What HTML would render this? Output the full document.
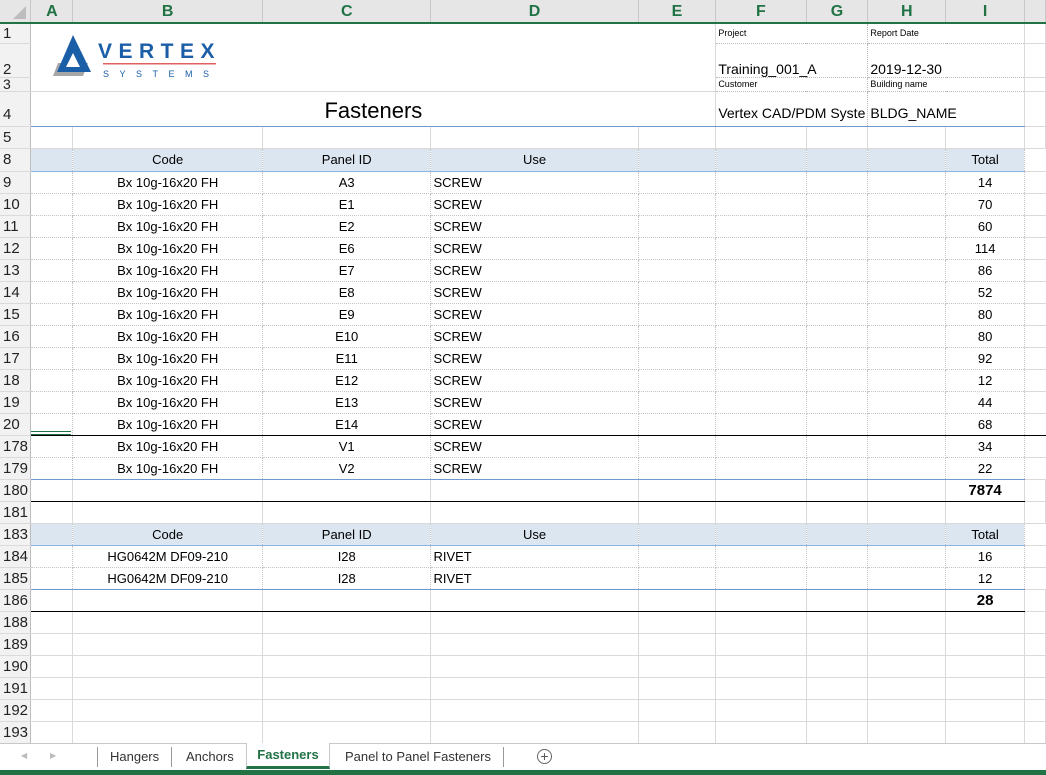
<!DOCTYPE html>
<html><head><meta charset="utf-8"><style>
*{margin:0;padding:0;box-sizing:border-box}
body{width:1046px;height:775px;overflow:hidden;background:#fff;font-family:"Liberation Sans",Arial,sans-serif;position:relative}
table{border-collapse:collapse;table-layout:fixed;position:absolute;left:0;top:0}
td,th{font-size:13px;color:#000;white-space:nowrap;overflow:hidden;padding:0 2px;border-right:1px solid #dadada;border-bottom:1px solid #dadada;font-weight:normal;vertical-align:middle;line-height:15px}
th.r{background:#f2f2f2;border-right:1px solid #bdbdbd;border-bottom:1px solid #dadada;text-align:left;padding-left:3px;font-size:15px;color:#222}
tr.hd th{background:#e6e6e6;color:#217346;font-weight:bold;font-size:16px;text-align:center;border-right:1px solid #c8c8c8;border-bottom:2px solid #217346}
.c{text-align:center}
tr.d td{border-right:1px dotted #c4c4c4;border-bottom:1px dotted #c4c4c4}
tr.h8 td{background:#dce6f1;border-top:1px solid #6f98cf;border-bottom:1px solid #8db4e2;border-right:1px dotted #c4c4c4}
tr.h8 td.x,tr.d td.x{background:#fff;border-right:none;border-bottom:1px solid #dadada}
tr.blk td{border-bottom:1px solid #000}
tr.blu td{border-bottom:1px solid #6f98cf}
.sm{font-size:9px;line-height:10px}
tr.tot td{font-weight:bold;font-size:15px}
</style></head><body>
<table>
<colgroup><col style="width:31px"><col style="width:42px"><col style="width:190px"><col style="width:169px"><col style="width:208px"><col style="width:78px"><col style="width:89px"><col style="width:61px"><col style="width:78px"><col style="width:79px"><col style="width:21px"></colgroup>
<tr class="hd" style="height:23px"><th></th><th>A</th><th>B</th><th>C</th><th>D</th><th>E</th><th>F</th><th>G</th><th>H</th><th>I</th><th></th></tr>
<tr style="height:20px"><th class="r">1</th><td colspan="5" rowspan="3"></td><td colspan="2" class="sm" style="border-right:1px dotted #bbb;border-bottom:1px dotted #bbb">Project</td><td class="sm" style="border-bottom:1px dotted #bbb" colspan="2">Report Date</td><td></td></tr>
<tr style="height:34px"><th class="r" style="vertical-align:bottom">2</th><td colspan="2" style="font-size:14px;vertical-align:bottom;border-right:1px dotted #bbb;border-bottom:1px dotted #bbb">Training_001_A</td><td colspan="2" style="font-size:14px;vertical-align:bottom;border-bottom:1px dotted #bbb">2019-12-30</td><td></td></tr>
<tr style="height:14px"><th class="r" style="font-size:14px;line-height:12px">3</th><td colspan="2" class="sm" style="border-right:1px dotted #bbb;border-bottom:1px dotted #bbb">Customer</td><td colspan="2" class="sm" style="border-bottom:1px dotted #bbb">Building name</td><td></td></tr>
<tr style="height:35px" class="blu"><th class="r" style="border-bottom:1px solid #dadada;vertical-align:bottom;padding-bottom:4px">4</th><td colspan="5" style="text-align:center;font-size:22px;line-height:26px;padding:4px 0 0 0">Fasteners</td><td colspan="2" style="font-size:14px;border-right:1px dotted #bbb;vertical-align:bottom;padding-bottom:5px">Vertex CAD/PDM Syste</td><td colspan="2" style="font-size:14px;vertical-align:bottom;padding-bottom:5px">BLDG_NAME</td><td style="border-bottom:1px solid #dadada"></td></tr>
<tr style="height:22px"><th class="r">5</th><td></td><td></td><td></td><td></td><td></td><td></td><td></td><td></td><td></td><td></td></tr>
<tr class="h8" style="height:23px"><th class="r">8</th><td></td><td class="c">Code</td><td class="c">Panel ID</td><td class="c">Use</td><td></td><td></td><td></td><td></td><td class="c">Total</td><td class="x"></td></tr>
<tr class="d" style="height:22px"><th class="r">9</th><td></td><td class="c">Bx 10g-16x20 FH</td><td class="c">A3</td><td>SCREW</td><td></td><td></td><td></td><td></td><td class="c">14</td><td class="x"></td></tr>
<tr class="d" style="height:22px"><th class="r">10</th><td></td><td class="c">Bx 10g-16x20 FH</td><td class="c">E1</td><td>SCREW</td><td></td><td></td><td></td><td></td><td class="c">70</td><td class="x"></td></tr>
<tr class="d" style="height:22px"><th class="r">11</th><td></td><td class="c">Bx 10g-16x20 FH</td><td class="c">E2</td><td>SCREW</td><td></td><td></td><td></td><td></td><td class="c">60</td><td class="x"></td></tr>
<tr class="d" style="height:22px"><th class="r">12</th><td></td><td class="c">Bx 10g-16x20 FH</td><td class="c">E6</td><td>SCREW</td><td></td><td></td><td></td><td></td><td class="c">114</td><td class="x"></td></tr>
<tr class="d" style="height:22px"><th class="r">13</th><td></td><td class="c">Bx 10g-16x20 FH</td><td class="c">E7</td><td>SCREW</td><td></td><td></td><td></td><td></td><td class="c">86</td><td class="x"></td></tr>
<tr class="d" style="height:22px"><th class="r">14</th><td></td><td class="c">Bx 10g-16x20 FH</td><td class="c">E8</td><td>SCREW</td><td></td><td></td><td></td><td></td><td class="c">52</td><td class="x"></td></tr>
<tr class="d" style="height:22px"><th class="r">15</th><td></td><td class="c">Bx 10g-16x20 FH</td><td class="c">E9</td><td>SCREW</td><td></td><td></td><td></td><td></td><td class="c">80</td><td class="x"></td></tr>
<tr class="d" style="height:22px"><th class="r">16</th><td></td><td class="c">Bx 10g-16x20 FH</td><td class="c">E10</td><td>SCREW</td><td></td><td></td><td></td><td></td><td class="c">80</td><td class="x"></td></tr>
<tr class="d" style="height:22px"><th class="r">17</th><td></td><td class="c">Bx 10g-16x20 FH</td><td class="c">E11</td><td>SCREW</td><td></td><td></td><td></td><td></td><td class="c">92</td><td class="x"></td></tr>
<tr class="d" style="height:22px"><th class="r">18</th><td></td><td class="c">Bx 10g-16x20 FH</td><td class="c">E12</td><td>SCREW</td><td></td><td></td><td></td><td></td><td class="c">12</td><td class="x"></td></tr>
<tr class="d" style="height:22px"><th class="r">19</th><td></td><td class="c">Bx 10g-16x20 FH</td><td class="c">E13</td><td>SCREW</td><td></td><td></td><td></td><td></td><td class="c">44</td><td class="x"></td></tr>
<tr class="d blk" style="height:22px"><th class="r">20</th><td></td><td class="c">Bx 10g-16x20 FH</td><td class="c">E14</td><td>SCREW</td><td></td><td></td><td></td><td></td><td class="c">68</td><td class="x" style="border-bottom:1px solid #000"></td></tr>
<tr class="d" style="height:22px"><th class="r">178</th><td></td><td class="c">Bx 10g-16x20 FH</td><td class="c">V1</td><td>SCREW</td><td></td><td></td><td></td><td></td><td class="c">34</td><td class="x"></td></tr>
<tr class="d blu" style="height:22px"><th class="r">179</th><td></td><td class="c">Bx 10g-16x20 FH</td><td class="c">V2</td><td>SCREW</td><td></td><td></td><td></td><td></td><td class="c">22</td><td class="x"></td></tr>
<tr class="blk tot" style="height:22px"><th class="r" style="font-weight:normal">180</th><td></td><td></td><td></td><td></td><td></td><td></td><td></td><td></td><td class="c">7874</td><td style="border-bottom:1px solid #dadada"></td></tr>
<tr style="height:22px"><th class="r">181</th><td></td><td></td><td></td><td></td><td></td><td></td><td></td><td></td><td></td><td></td></tr>
<tr class="h8" style="height:22px"><th class="r">183</th><td></td><td class="c">Code</td><td class="c">Panel ID</td><td class="c">Use</td><td></td><td></td><td></td><td></td><td class="c">Total</td><td class="x"></td></tr>
<tr class="d" style="height:22px"><th class="r">184</th><td></td><td class="c">HG0642M DF09-210</td><td class="c">I28</td><td>RIVET</td><td></td><td></td><td></td><td></td><td class="c">16</td><td class="x"></td></tr>
<tr class="d blu" style="height:22px"><th class="r">185</th><td></td><td class="c">HG0642M DF09-210</td><td class="c">I28</td><td>RIVET</td><td></td><td></td><td></td><td></td><td class="c">12</td><td class="x"></td></tr>
<tr class="blk tot" style="height:22px"><th class="r" style="font-weight:normal">186</th><td></td><td></td><td></td><td></td><td></td><td></td><td></td><td></td><td class="c">28</td><td style="border-bottom:1px solid #dadada"></td></tr>
<tr style="height:22px"><th class="r">188</th><td></td><td></td><td></td><td></td><td></td><td></td><td></td><td></td><td></td><td></td></tr>
<tr style="height:22px"><th class="r">189</th><td></td><td></td><td></td><td></td><td></td><td></td><td></td><td></td><td></td><td></td></tr>
<tr style="height:22px"><th class="r">190</th><td></td><td></td><td></td><td></td><td></td><td></td><td></td><td></td><td></td><td></td></tr>
<tr style="height:22px"><th class="r">191</th><td></td><td></td><td></td><td></td><td></td><td></td><td></td><td></td><td></td><td></td></tr>
<tr style="height:22px"><th class="r">192</th><td></td><td></td><td></td><td></td><td></td><td></td><td></td><td></td><td></td><td></td></tr>
<tr style="height:22px"><th class="r">193</th><td></td><td></td><td></td><td></td><td></td><td></td><td></td><td></td><td></td><td></td></tr>
</table>
<svg style="position:absolute;left:0;top:0" width="31" height="22"><polygon points="26,6 26,19 13,19" fill="#bdbdbd"/></svg>
<div style="position:absolute;left:31px;top:431px;width:40px;height:4px;border-top:1px solid #217346;border-bottom:1px solid #217346"></div>
<svg style="position:absolute;left:50px;top:33px" width="170" height="46">
<polygon points="3,43 8,30 38,30 33,43" fill="#a6a6a6"/>
<polygon points="23,2 7,39 41,39" fill="#1b5ea8"/>
<polygon points="23,20 16,34 30,34" fill="#fff"/>
<text x="48" y="25" font-family="Liberation Sans,Arial,sans-serif" font-weight="bold" font-size="21" fill="#1b5ea8" letter-spacing="6.5">VERTEX</text>
<rect x="53" y="30" width="113" height="1.5" fill="#e06060"/>
<text x="53" y="44" font-family="Liberation Sans,Arial,sans-serif" font-size="9" fill="#1b5ea8" letter-spacing="10.5">SYSTEMS</text>
</svg>
<div style="position:absolute;left:0;top:743px;width:1046px;height:27px;background:#fff;border-top:1px solid #c8c8c8;font-size:13px;color:#333">
<span style="position:absolute;left:21px;top:7px;color:#bbb;font-size:8px">&#9664;</span>
<span style="position:absolute;left:50px;top:7px;color:#bbb;font-size:8px">&#9654;</span>
<div style="position:absolute;left:97px;top:3px;height:20px;border-left:1px solid #999"></div>
<span style="position:absolute;left:110px;top:5px">Hangers</span>
<div style="position:absolute;left:171px;top:3px;height:20px;border-left:1px solid #999"></div>
<span style="position:absolute;left:186px;top:5px">Anchors</span>
<div style="position:absolute;left:246px;top:-1px;width:84px;height:26px;background:#fff;border-left:1px solid #c8c8c8;border-right:1px solid #c8c8c8;border-bottom:3px solid #217346;color:#217346;font-weight:bold;text-align:center;line-height:24px">Fasteners</div>
<span style="position:absolute;left:345px;top:5px">Panel to Panel Fasteners</span>
<div style="position:absolute;left:503px;top:3px;height:20px;border-left:1px solid #999"></div>
<div style="position:absolute;left:537px;top:5px;width:15px;height:15px;border:1px solid #666;border-radius:50%;text-align:center;line-height:13px;font-size:14px;color:#555">+</div>
</div>
<div style="position:absolute;left:0;top:770px;width:1046px;height:5px;background:#217346"></div>
</body></html>
